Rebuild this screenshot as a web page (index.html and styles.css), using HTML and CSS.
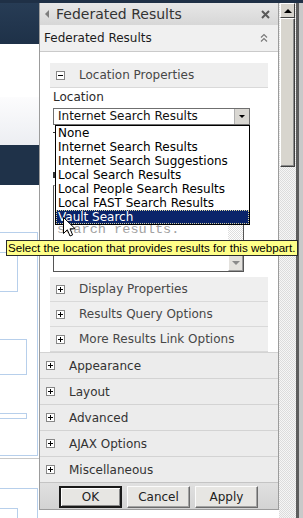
FILE: index.html
```html
<!DOCTYPE html>
<html lang="en">
<head>
  <meta charset="UTF-8" />
  <title>Federated Results</title>
  <link rel="stylesheet" href="styles.css">
</head>
<body>

<div class="screen">
  <!-- page behind the tool pane -->
  <div class="page">
    <div class="page-top"></div>
    <div class="page-white"></div>
    <div class="page-fade"></div>
    <div class="page-nav"></div>
    <div class="page-body">
      <div class="pbox pbox-outer">
        <div class="pbox pbox-a"></div>
        <div class="pbox pbox-b"></div>
        <div class="pbox pbox-c"></div>
      </div>
      <div class="page-rule"></div>
      <div class="pbox pbox-outer2">
        <div class="pbox pbox-a"></div>
      </div>
    </div>
  </div>

  <!-- tool pane -->
  <div class="pane-col">
    <div class="pane">
      <div class="pane-title">
        <span class="back-arrow"></span>
        <span class="pane-title-text">Federated Results</span>
        <svg class="close-icon" width="9" height="9" viewBox="0 0 9 9">
          <path d="M1 1L8 8M8 1L1 8" stroke="#5a5a5a" stroke-width="2"/>
        </svg>
      </div>

      <div class="pane-sub">
        <span>Federated Results</span>
        <svg class="collapse-icon" width="8" height="10" viewBox="0 0 8 10">
          <path d="M1 4.5L4 1.5L7 4.5M1 8.5L4 5.5L7 8.5" fill="none" stroke="#7a7a7a" stroke-width="1.2"/>
        </svg>
      </div>

      <div class="pane-content">
        <div class="group-head"><span class="tog"></span>Location Properties</div>
        <div class="group-body">
          <div class="field-label">Location</div>
          <div class="select-wrap">
            <div class="select">
              <span class="select-text">Internet Search Results</span>
              <span class="select-btn"><span class="tri-down"></span></span>
            </div>
            <ul class="listbox">
              <li>None</li>
              <li>Internet Search Results</li>
              <li>Internet Search Suggestions</li>
              <li>Local Search Results</li>
              <li>Local People Search Results</li>
              <li>Local FAST Search Results</li>
              <li class="selected">Vault Search</li>
            </ul>
          </div>
          <!-- bits of the fields hidden behind the open list -->
          <div class="hidden-fields">
            <div class="hidden-dash"></div>
            <div class="hidden-mark"></div>
          </div>
          <div class="textarea">
            <div class="textarea-text">search results.</div>
            <div class="textarea-scroll">
              <span class="textarea-track"></span>
              <span class="textarea-btn"><span class="tri-down grey"></span></span>
            </div>
          </div>
        </div>
        <div class="group-head"><span class="tog plus"></span>Display Properties</div>
        <div class="group-head"><span class="tog plus"></span>Results Query Options</div>
        <div class="group-head"><span class="tog plus"></span>More Results Link Options</div>
      </div>

      <div class="cat"><span class="tog plus"></span>Appearance</div>
      <div class="cat"><span class="tog plus"></span>Layout</div>
      <div class="cat"><span class="tog plus"></span>Advanced</div>
      <div class="cat"><span class="tog plus"></span>AJAX Options</div>
      <div class="cat"><span class="tog plus"></span>Miscellaneous</div>

      <div class="pane-buttons">
        <button class="btn btn-default">OK</button>
        <button class="btn">Cancel</button>
        <button class="btn">Apply</button>
      </div>
    </div>
  </div>

  <!-- window scrollbar -->
  <div class="vscroll">
    <span class="vs-btn"><span class="tri-up"></span></span>
    <span class="vs-thumb"></span>
  </div>
  <div class="frame-edge"></div>
</div>

<div class="tooltip">Select the location that provides results for this webpart.</div>

<svg class="cursor" width="13" height="20" viewBox="0 0 13 20">
  <path d="M0.5 0.5V16.5L4.3 12.8L7 19L9.6 17.9L7 11.8H12.2Z" fill="#fff" stroke="#000" stroke-width="1"/>
</svg>

</body>
</html>
```

FILE: styles.css
```css
* { box-sizing: border-box; }

html, body {
  margin: 0;
  padding: 0;
}

body {
  width: 303px;
  height: 518px;
  overflow: hidden;
  position: relative;
  font-family: "DejaVu Sans", Verdana, sans-serif;
  font-size: 12px;
  color: #333;
  background: #fff;
}

.screen {
  display: flex;
  height: 518px;
  border-top: 3px solid #1f3046;
}

/* page behind */
.page {
  width: 39px;
  flex: none;
  overflow: hidden;
  background: #fff;
}

.page-top { height: 41px; background: linear-gradient(#273c55, #1e3148); }
.page-white { height: 53px; background: #fff; }
.page-fade { height: 48px; background: linear-gradient(#fcfcfd, #eceef2); }
.page-nav { height: 40px; background: #1f3249; }

.page-body { padding-top: 47px; }

.pbox {
  border: 1px solid #b7cfeb;
  border-left: 0;
}

.pbox-outer { width: 38px; height: 224px; padding-top: 19px; }
.pbox-a { width: 18px; height: 40px; }
.pbox-b { width: 27px; height: 36px; margin-top: 47px; }
.pbox-c { width: 27px; height: 6px; margin-top: 38px; }

.page-rule {
  height: 1px;
  margin-top: 2px;
  background: #c9c9c9;
}

.pbox-outer2 {
  width: 38px;
  height: 60px;
  margin-top: 29px;
  padding-top: 19px;
  border-bottom: 0;
}

/* tool pane */
.pane-col {
  width: 240px;
  flex: none;
  background: #fff;
}

.pane {
  height: 507px;
  border: 1px solid #9c9c9c;
  border-top: 0;
  display: flex;
  flex-direction: column;
  background: #fff;
}

.pane-title {
  height: 22px;
  flex: none;
  display: flex;
  align-items: center;
  padding: 0 8px 0 5px;
  background: linear-gradient(#e7e7e7, #d7d7d7);
  font-size: 14px;
  color: #333;
}

.back-arrow {
  width: 0;
  height: 0;
  border-top: 4px solid transparent;
  border-bottom: 4px solid transparent;
  border-right: 4px solid #7d7d7d;
}

.pane-title-text { margin-left: 7px; }

.close-icon { margin-left: auto; }

.pane-sub {
  height: 27px;
  flex: none;
  display: flex;
  align-items: center;
  padding: 0 10px 0 4px;
  background: #f0f0f0;
  border-bottom: 1px solid #cacaca;
  color: #1c1c1c;
}

.collapse-icon { margin-left: auto; }

.pane-content {
  height: 300px;
  flex: none;
  padding: 11px 10px 0;
  background: #fff;
}

.group-head {
  height: 25px;
  display: flex;
  align-items: center;
  padding-left: 6px;
  background: #efefef;
  border-bottom: 1px solid #d9d9d9;
  color: #474747;
}

.tog {
  width: 9px;
  height: 9px;
  flex: none;
  margin-right: 14px;
  border: 1px solid #878787;
  background: #fff;
  position: relative;
}

.tog::before {
  content: "";
  position: absolute;
  left: 1px;
  top: 3px;
  width: 5px;
  height: 1px;
  background: #000;
}

.tog.plus::after {
  content: "";
  position: absolute;
  left: 3px;
  top: 1px;
  width: 1px;
  height: 5px;
  background: #000;
}

.group-body {
  height: 189px;
  padding-left: 3px;
}

.field-label {
  height: 20px;
  line-height: 19px;
  color: #2a2a2a;
}

.select-wrap {
  position: relative;
  width: 197px;
}

.select {
  height: 17px;
  display: flex;
  align-items: center;
  border: 1px solid #6f6f6f;
  background: #fff;
  color: #111;
}

.select-text {
  flex: 1;
  padding-left: 4px;
  line-height: 15px;
}

.select-btn {
  width: 15px;
  height: 15px;
  display: flex;
  align-items: center;
  justify-content: center;
  background: #d9d7d2;
  border-left: 1px solid #b0b0b0;
}

.tri-down {
  width: 0;
  height: 0;
  border-left: 3px solid transparent;
  border-right: 3px solid transparent;
  border-top: 3px solid #000;
}

.tri-down.grey {
  border-top-color: #8a8a8a;
  border-left-width: 4px;
  border-right-width: 4px;
  border-top-width: 4px;
}

.listbox {
  position: absolute;
  top: 17px;
  left: 2px;
  right: 0;
  margin: 0;
  padding: 0;
  list-style: none;
  border: 1px solid #000;
  background: #fff;
  color: #000;
  z-index: 2;
}

.listbox li {
  height: 14px;
  line-height: 14px;
  padding-left: 2px;
  white-space: nowrap;
}

.listbox li.selected {
  background: #0a246a;
  color: #fff;
  outline: 1px dotted #d8d3a0;
  outline-offset: -1px;
}

.hidden-fields {
  height: 60px;
  padding-top: 7px;
}

.hidden-dash {
  width: 6px;
  height: 1px;
  background: #333;
}

.hidden-mark {
  width: 2px;
  height: 6px;
  margin-top: 39px;
  background: #333;
}

.textarea {
  width: 191px;
  height: 87px;
  display: flex;
  border: 1px solid #555;
  border-top-color: #999;
  background: #fff;
}

.textarea-text {
  flex: 1;
  padding: 36px 0 0 3px;
  font-family: "Liberation Mono", "Courier New", monospace;
  font-size: 13.6px;
  line-height: 16px;
  color: #a2a2a2;
}

.textarea-scroll {
  width: 15px;
  display: flex;
  flex-direction: column;
  background: repeating-conic-gradient(#fff 0 25%, #dedede 0 50%) 0 0 / 2px 2px;
}

.textarea-track { flex: 1; }

.textarea-btn {
  height: 17px;
  display: flex;
  align-items: center;
  justify-content: center;
  background: #e4e2de;
  border: 1px solid;
  border-color: #fff #9a9a9a #9a9a9a #fff;
}

/* outer categories */
.cat {
  height: 26px;
  flex: none;
  display: flex;
  align-items: center;
  padding-left: 6px;
  background: #ececec;
  border-top: 1px solid #d3d3d3;
  color: #333;
}

.pane-buttons {
  flex: 1;
  display: flex;
  gap: 5px;
  padding: 3px 0 0 19px;
  background: linear-gradient(#e0e0e0, #d3d3d3);
  border-top: 1px solid #c4c4c4;
}

.btn {
  width: 63px;
  height: 22px;
  padding: 0;
  font-family: "DejaVu Sans", Verdana, sans-serif;
  font-size: 12px;
  color: #222;
  background: #e7e6e3;
  border: 1px solid;
  border-color: #fbfbfb #6b6b6b #6b6b6b #fbfbfb;
  box-shadow: inset -1px -1px #a3a3a3;
}

.btn-default {
  border: 2px solid #1a1a1a;
  box-shadow: inset 1px 1px #fff, inset -1px -1px #8a8a8a;
}

/* window scrollbar */
.vscroll {
  width: 17px;
  flex: none;
  display: flex;
  flex-direction: column;
  padding-left: 1px;
  background: repeating-conic-gradient(#f6f6f6 0 25%, #dcdcdc 0 50%) 0 0 / 2px 2px;
}

.vs-btn {
  width: 15px;
  height: 15px;
  display: flex;
  align-items: center;
  justify-content: center;
  background: #d6d3cc;
  border: 1px solid;
  border-color: #fff #404040 #404040 #fff;
}

.tri-up {
  width: 0;
  height: 0;
  border-left: 4px solid transparent;
  border-right: 4px solid transparent;
  border-bottom: 4px solid #000;
}

.vs-thumb {
  width: 15px;
  height: 149px;
  background: #d8d5ce;
  border: 1px solid;
  border-color: #fff #404040 #404040 #fff;
  box-shadow: inset -1px -1px #8c8c8c;
}

.frame-edge {
  flex: 1;
  border-left: 3px solid #5d5d5d;
  background: #c9c9c9;
}

/* overlays */
.tooltip {
  position: absolute;
  left: 6px;
  top: 240px;
  width: 292px;
  height: 16px;
  padding-left: 1px;
  border: 1px solid #2a2a2a;
  background: #ffff88;
  font-family: "Liberation Sans", Arial, sans-serif;
  font-size: 11.6px;
  line-height: 14px;
  color: #000;
  white-space: nowrap;
  z-index: 5;
}

.cursor {
  position: absolute;
  left: 63px;
  top: 217px;
  z-index: 6;
}
```
